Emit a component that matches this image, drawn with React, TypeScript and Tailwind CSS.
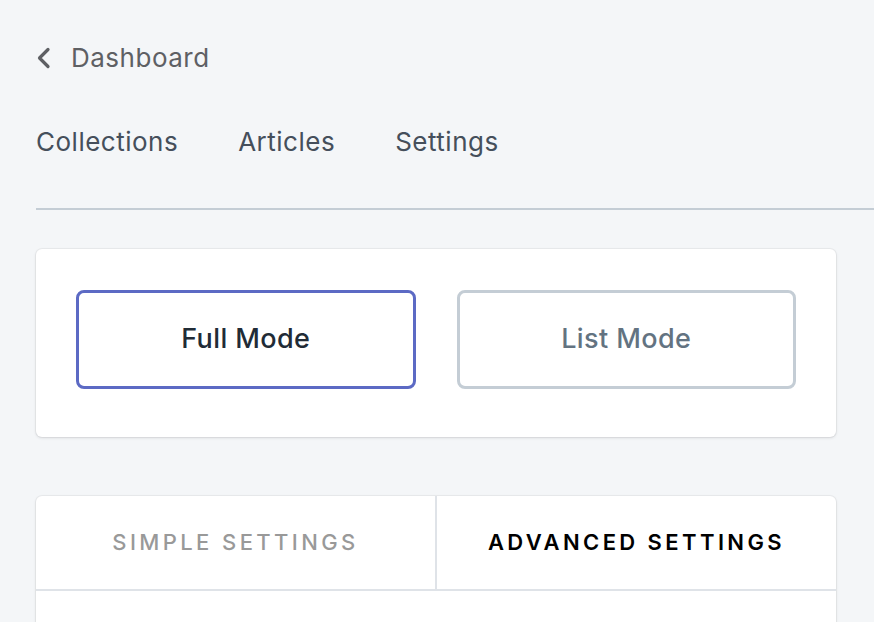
const navItems = ['Collections', 'Articles', 'Settings'];

export default function App() {
  return (
    <main
      className="min-h-screen w-full bg-[#f4f6f8] overflow-hidden"
      style={{ fontFamily: 'Inter, "Noto Sans", sans-serif' }}
    >
      <div className="pl-9 pt-[42px]">
        <a className="flex items-center gap-[20px] text-[26px] leading-[32px] tracking-[0.5px] text-[#5e6064]">
          <svg width="15" height="22" viewBox="0 0 15 22" fill="none">
            <path d="M12 2.5 L3.5 11 L12 19.5" stroke="#5e6064" strokeWidth="3.2" strokeLinecap="round" strokeLinejoin="round" />
          </svg>
          <span>Dashboard</span>
        </a>

        <nav className="mt-[52px] flex gap-[60px] text-[26px] leading-[32px] tracking-[0.5px] text-[#454f5b]">
          {navItems.map(item => (
            <span key={item}>{item}</span>
          ))}
        </nav>

        <div className="mt-[50px] h-[2px] bg-[#c4cdd5]" />

        <div className="mr-[38px] mt-[39px] space-y-[59px]">
          <section className="rounded-md bg-white shadow-[0_0_0_1px_rgba(63,63,68,0.05),0_1px_3px_0_rgba(63,63,68,0.15)] px-10 pt-[41px] pb-[48px] flex gap-[41px]">
            <button className="flex-1 h-[99px] rounded-lg border-[3px] border-[#5c6ac4] bg-white text-[27px] tracking-[0.4px] font-medium text-[#212b36]">
              Full Mode
            </button>
            <button className="flex-1 h-[99px] rounded-lg border-[3px] border-[#c4cdd5] bg-white text-[27px] tracking-[0.4px] font-medium text-[#637381]">
              List Mode
            </button>
          </section>

          <section className="rounded-md bg-white shadow-[0_0_0_1px_rgba(63,63,68,0.05),0_1px_3px_0_rgba(63,63,68,0.15)] overflow-hidden">
            <div className="flex border-b-2 border-[#dfe3e8]">
              <div className="flex-1 h-[93px] flex items-center justify-center border-r-2 border-[#dfe3e8] text-[22px] tracking-[3.4px] font-medium text-[#999999]">
                SIMPLE SETTINGS
              </div>
              <div className="flex-1 h-[93px] flex items-center justify-center text-[22px] tracking-[3.4px] font-semibold text-black">
                ADVANCED SETTINGS
              </div>
            </div>
            <div className="h-[120px]" />
          </section>
        </div>
      </div>
    </main>
  );
}
